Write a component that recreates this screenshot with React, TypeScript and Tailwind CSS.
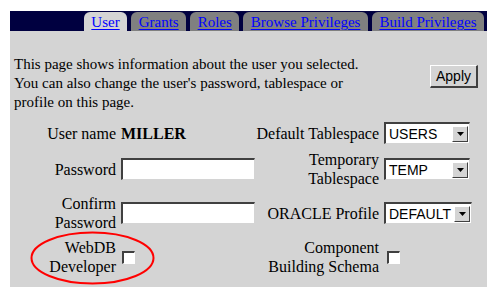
import React from "react";

const serif = { fontFamily: '"Liberation Serif", "Times New Roman", serif' };

function Tab({ label, active }: { label: string; active?: boolean }) {
  return (
    <div
      className={
        "h-[19px] px-[7.5px] rounded-t-[6px] flex items-end leading-[18px] text-[15px] " +
        (active ? "bg-[#d4d4d4]" : "bg-[#808080]")
      }
    >
      <a href="#" className="text-[#0000ff] underline underline-offset-[2px]">
        {label}
      </a>
    </div>
  );
}

function Select({ value, width }: { value: string; width: number }) {
  return (
    <div
      className="h-[22px] bg-white border-t-[2px] border-l-[2px] border-t-[#404040] border-l-[#404040] border-b border-r border-b-[#d4d4d4] border-r-[#d4d4d4] flex items-center"
      style={{ width }}
    >
      <span
        className="flex-1 pl-[3px] text-[14px] text-black leading-none"
        style={{ fontFamily: '"Liberation Sans", Arial, sans-serif' }}
      >
        {value}
      </span>
      <div className="w-[16px] h-[16px] mr-[1px] bg-[#d4d4d4] border-t border-l border-t-white border-l-white border-b border-r border-b-[#404040] border-r-[#404040] flex items-center justify-center">
        <svg width="7" height="4" viewBox="0 0 7 4">
          <polygon points="0,0 7,0 3.5,4" fill="#000" />
        </svg>
      </div>
    </div>
  );
}

function TextInput() {
  return (
    <div className="w-[134px] h-[22px] bg-white border-t-[2px] border-l-[2px] border-t-[#404040] border-l-[#404040] border-b border-r border-b-[#d4d4d4] border-r-[#d4d4d4]" />
  );
}

function Checkbox() {
  return (
    <div className="w-[13px] h-[13px] bg-white border-t-[2px] border-l-[2px] border-t-[#404040] border-l-[#404040] border-b border-r border-b-white border-r-white" />
  );
}

function Label({ children }: { children: React.ReactNode }) {
  return <div className="flex justify-end text-right whitespace-nowrap">{children}</div>;
}

export default function App() {
  return (
    <div className="w-[498px] h-[297px] bg-white pt-[11px] pl-[10px]" style={serif}>
      <div className="w-[477px]">
        <div className="h-[20px] bg-[#000040] flex justify-end items-end gap-[4px] pr-[3px]">
          <Tab label="User" active />
          <Tab label="Grants" />
          <Tab label="Roles" />
          <Tab label="Browse Privileges" />
          <Tab label="Build Privileges" />
        </div>
        <div className="relative h-[256px] bg-[#d4d4d4] pl-[4px] pt-[24px] text-black">
          <div className="flex justify-between">
            <p className="text-[15px] leading-[19px] w-[360px]">
              This page shows information about the user you selected.
              <br />
              You can also change the user's password, tablespace or
              <br />
              profile on this page.
            </p>
            <div className="mr-[9px] mt-[9px]">
              <button
                className="w-[48px] h-[23px] bg-[#d4d4d4] border-t border-l border-t-white border-l-white border-b-[2px] border-r-[2px] border-b-[#404040] border-r-[#404040] text-[14px] leading-none"
                style={{ fontFamily: '"Liberation Sans", Arial, sans-serif' }}
              >
                Apply
              </button>
            </div>
          </div>
          <div className="grid grid-cols-[102px_134px_119px_auto] gap-x-[5px] grid-rows-[22px_38px_38px_38px] gap-y-[6px] mt-[10px] text-[16px] leading-[19px] items-center">
            <Label>User name</Label>
            <div className="font-bold">MILLER</div>
            <Label>Default Tablespace</Label>
            <Select value="USERS" width={86} />

            <Label>Password</Label>
            <TextInput />
            <Label>
              <span>
                Temporary
                <br />
                Tablespace
              </span>
            </Label>
            <Select value="TEMP" width={86} />

            <Label>
              <span>
                Confirm
                <br />
                Password
              </span>
            </Label>
            <TextInput />
            <Label>ORACLE Profile</Label>
            <Select value="DEFAULT" width={88} />

            <Label>
              <span>
                WebDB
                <br />
                Developer
              </span>
            </Label>
            <div className="pl-[1px]">
              <Checkbox />
            </div>
            <Label>
              <span>
                Component
                <br />
                Building Schema
              </span>
            </Label>
            <div className="pl-[3px]">
              <Checkbox />
            </div>
          </div>
          <svg
            className="absolute left-[20px] top-[200px]"
            width="125"
            height="54"
            viewBox="0 0 125 54"
          >
            <ellipse cx="62.5" cy="27" rx="61" ry="25.5" fill="none" stroke="#ff0000" strokeWidth="2" />
          </svg>
        </div>
      </div>
    </div>
  );
}
